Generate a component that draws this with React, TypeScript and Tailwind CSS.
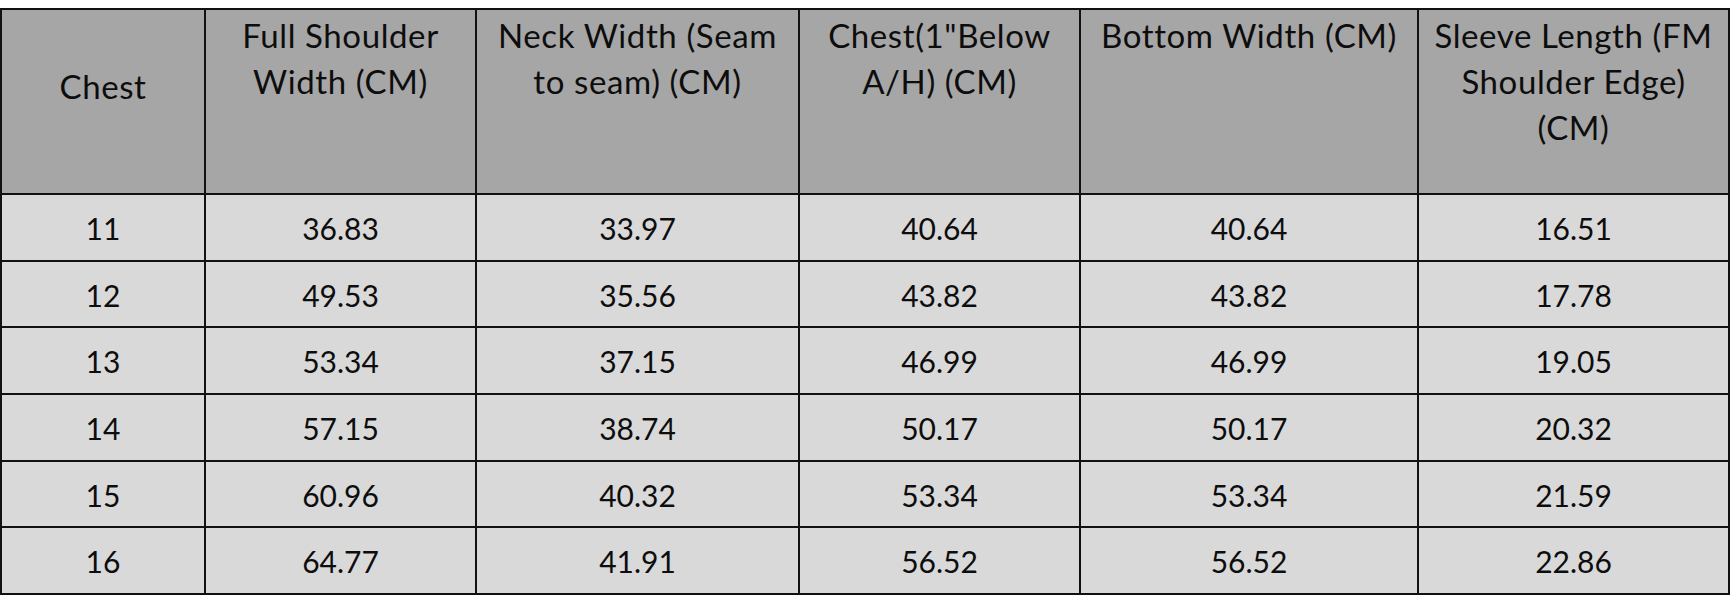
const COLS = ["w-[204px]", "w-[271px]", "w-[323px]", "w-[281px]", "w-[338px]", "w-[311px]"]

// header lines broken where the sheet wraps them
const HEADERS = [
    ["Chest"],
    ["Full Shoulder", "Width (CM)"],
    ["Neck Width (Seam", "to seam) (CM)"],
    ["Chest(1\"Below", "A/H) (CM)"],
    ["Bottom Width (CM)"],
    ["Sleeve Length (FM", "Shoulder Edge)", "(CM)"],
]

const ROWS = [
    ["11", "36.83", "33.97", "40.64", "40.64", "16.51"],
    ["12", "49.53", "35.56", "43.82", "43.82", "17.78"],
    ["13", "53.34", "37.15", "46.99", "46.99", "19.05"],
    ["14", "57.15", "38.74", "50.17", "50.17", "20.32"],
    ["15", "60.96", "40.32", "53.34", "53.34", "21.59"],
    ["16", "64.77", "41.91", "56.52", "56.52", "22.86"],
]

// row heights incl. bottom border, to land on the grid lines of the sheet
const ROW_H = ["h-[67px]", "h-[66px]", "h-[67px]", "h-[67px]", "h-[66px]", "h-[67px]"]

export default function App() {
    return (
        <div className="w-[1733px] h-[605px] bg-white pt-[8px] font-['Lato',sans-serif] leading-[46px] text-[#0d0d0d]">
            <div className="inline-flex flex-col border-l-2 border-t-2 border-[#111]">
                {/* Header */}
                <div className="flex h-[185px] bg-[#a6a6a6] text-[33px] tracking-[0.6px]">
                    {HEADERS.map((lines, i) => (
                        <div
                            key={i}
                            className={`${COLS[i]} shrink-0 border-r-2 border-b-2 border-[#111] text-center whitespace-nowrap ${i === 0 ? "pt-[53px]" : "pt-[2px]"}`}
                        >
                            {lines.map((l) => (
                                <div key={l}>{l}</div>
                            ))}
                        </div>
                    ))}
                </div>

                {/* Body */}
                {ROWS.map((row, r) => (
                    <div key={row[0]} className={`flex ${ROW_H[r]} bg-[#d9d9d9] text-[30px]`}>
                        {row.map((v, i) => (
                            <div
                                key={i}
                                className={`${COLS[i]} shrink-0 border-r-2 border-b-2 border-[#111] flex items-center justify-center pt-[1px]`}
                            >
                                {v}
                            </div>
                        ))}
                    </div>
                ))}
            </div>
        </div>
    )
}
